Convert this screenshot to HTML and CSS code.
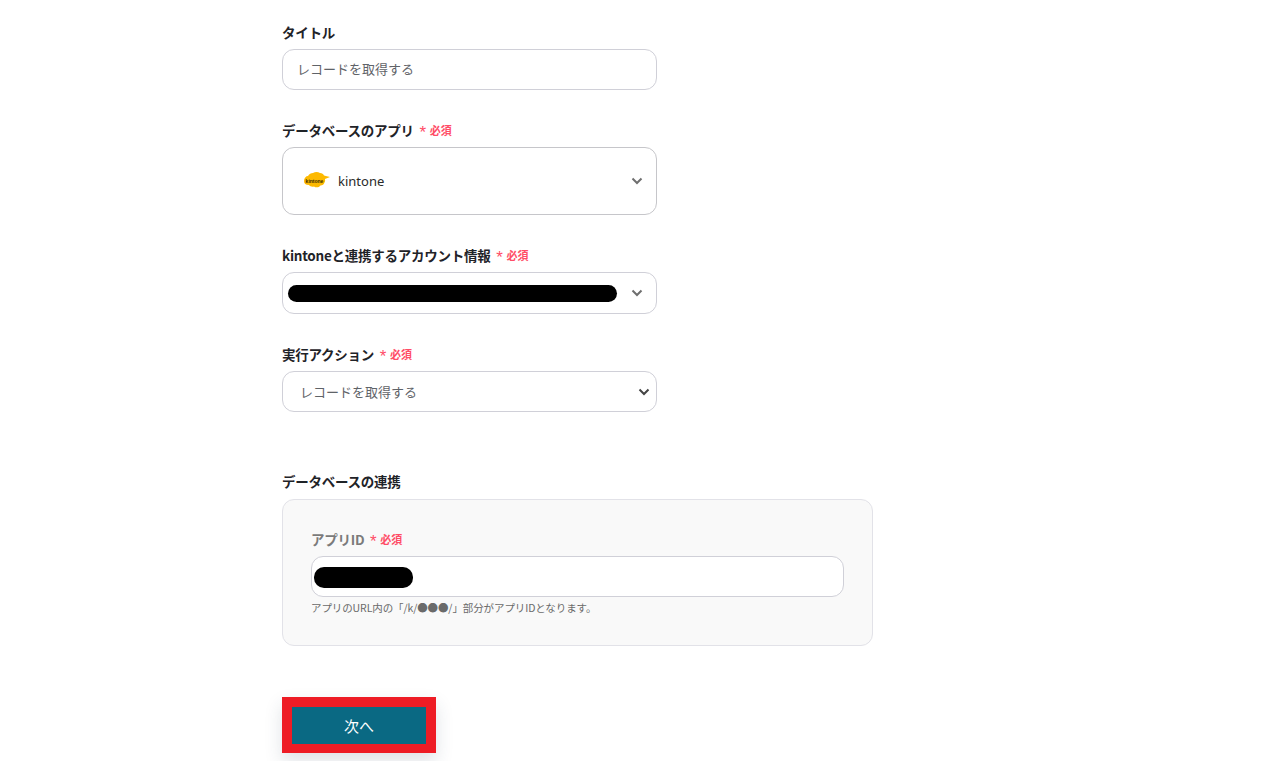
FILE: index.html
```html
<!DOCTYPE html>
<html lang="ja">
<head>
<meta charset="utf-8">
<title>レコードを取得する</title>
<link rel="stylesheet" href="styles.css">
</head>
<body>
<main class="page">
  <section class="field field-title">
    <div class="label">タイトル</div>
    <div class="control control-text">レコードを取得する</div>
  </section>

  <section class="field field-app">
    <div class="label">データベースのアプリ<span class="req"><span class="star">*</span>必須</span></div>
    <div class="control control-app">
      <svg class="logo" width="28" height="20" viewBox="0 0 28 20">
        <path fill="#fdb900" d="M1 10c0-3 2-5 4-5 1-2 3-3 5-3 2-1.500 5-1.500 7 0 2 0 3.500 1 4 2.500l6 1.500-5 2c0 1 .5 2-.5 3.500-.5 2-2 3-4 3-1.500 2-4.500 2.500-6.500 1-2 .5-4 0-5-1.500C2.500 14 1 12.500 1 10z"/>
        <text class="logo-text" x="11.500" y="11.500" text-anchor="middle">kintone</text>
      </svg>
      <span class="app-name">kintone</span>
      <svg class="chev chev-gray" width="12" height="8" viewBox="0 0 12 8"><path d="M1.500 1.500 6 6l4.500-4.500"/></svg>
    </div>
  </section>

  <section class="field field-account">
    <div class="label">kintoneと連携するアカウント情報<span class="req"><span class="star">*</span>必須</span></div>
    <div class="control control-account">
      <div class="redact redact-account"></div>
      <svg class="chev chev-gray" width="12" height="8" viewBox="0 0 12 8"><path d="M1.500 1.500 6 6l4.500-4.500"/></svg>
    </div>
  </section>

  <section class="field field-action">
    <div class="label">実行アクション<span class="req"><span class="star">*</span>必須</span></div>
    <div class="control control-action">
      <span>レコードを取得する</span>
      <svg class="chev chev-dark" width="12" height="8" viewBox="0 0 12 8"><path d="M1.500 1.500 6 6l4.500-4.500"/></svg>
    </div>
  </section>

  <section class="field-db">
    <div class="label">データベースの連携</div>
    <div class="panel">
      <div class="label label-muted">アプリID<span class="req"><span class="star">*</span>必須</span></div>
      <div class="control control-id"><div class="redact redact-id"></div></div>
      <p class="help">アプリのURL内の「/k/●●●/」部分がアプリIDとなります。</p>
    </div>
  </section>

  <div class="next-outline"><button class="next" type="button">次へ</button></div>
</main>
</body>
</html>
```

FILE: styles.css
```css
* { box-sizing: border-box; }
html, body { margin: 0; height: 761px; overflow: hidden; background: #fff; }
body {
  font-family: "Noto Sans CJK JP", "Noto Sans", sans-serif;
  color: #1f2328;
}
.page { padding: 23px 0 0 282px; display: flex; flex-direction: column; align-items: flex-start; }

.field { width: 375px; }
.field-app { margin-top: 31px; }
.field-account { margin-top: 31px; }
.field-action { margin-top: 31px; }
.field-db { margin-top: 60px; width: 591px; }

.label {
  height: 18px;
  line-height: 18px;
  font-size: 13.500px;
  font-weight: 700;
  letter-spacing: -0.250px;
  color: #1f2328;
  white-space: nowrap;
  display: flex;
  align-items: center;
}
.label-muted { color: #7b7b7b; }
.req {
  display: inline-flex;
  align-items: center;
  margin-left: 3px;
  font-size: 11px;
  font-weight: 700;
  letter-spacing: 0;
  color: #ff4d67;
}
.star { width: 12px; font-size: 17px; line-height: 18px; height: 18px; padding-top: 3px; font-weight: 500; text-align: center; margin-right: 1px; font-family: "Liberation Sans", sans-serif; }

.control {
  margin-top: 8px;
  width: 375px;
  background: #fff;
  border: 1px solid #d0d0d8;
  border-radius: 12px;
  display: flex;
  align-items: center;
  font-size: 13px;
  color: #5f6368;
}
.control-text { height: 41px; padding: 0 14px 2px; }
.control-app { height: 68px; padding-left: 20px; border-color: #c6c6ca; color: #2a2a2a; }
.control-account { height: 42px; padding-left: 5px; }
.control-action { height: 41px; padding-left: 17px; }
.control-id { width: 533px; height: 41px; padding-left: 2px; margin-top: 8px; }

.logo { flex: none; }
.logo-text { font-size: 5px; font-weight: 700; fill: #3a2a00; font-family: "Liberation Sans", sans-serif; }
.app-name { margin-left: 7px; font-size: 13px; font-family: "Noto Sans", sans-serif; }

.chev { flex: none; margin-left: auto; fill: none; stroke-width: 2; }
.chev-gray { stroke: #6f6f6f; margin-right: 13px; }
.chev-dark { stroke: #444; margin-right: 0; margin-left: auto; position: relative; left: -6px; }

.redact { background: #000; border-radius: 9px; }
.redact-account { width: 329px; height: 17px; }
.redact-id { width: 99px; height: 21px; border-radius: 10px; position: relative; top: 1px; }

.panel {
  margin-top: 9px;
  width: 591px;
  height: 147px;
  background: #f9f9f9;
  border: 1px solid #e2e2e8;
  border-radius: 12px;
  padding: 30px 28px 0;
}
.help { margin: 2px 0 0; font-size: 10.500px; line-height: 18px; color: #6a6a6a; letter-spacing: -0.100px; white-space: nowrap; }

.next-outline {
  margin-top: 51px;
  width: 154px;
  height: 56px;
  background: #ee1c25;
  padding: 10px 10px 9px;
  box-shadow: 0 8px 18px rgba(40, 60, 90, 0.15);
}
.next {
  display: block;
  width: 134px;
  height: 37px;
  padding: 0;
  border: 0;
  background: #0a6983;
  color: #fff;
  font-family: inherit;
  font-size: 15px;
}
```
